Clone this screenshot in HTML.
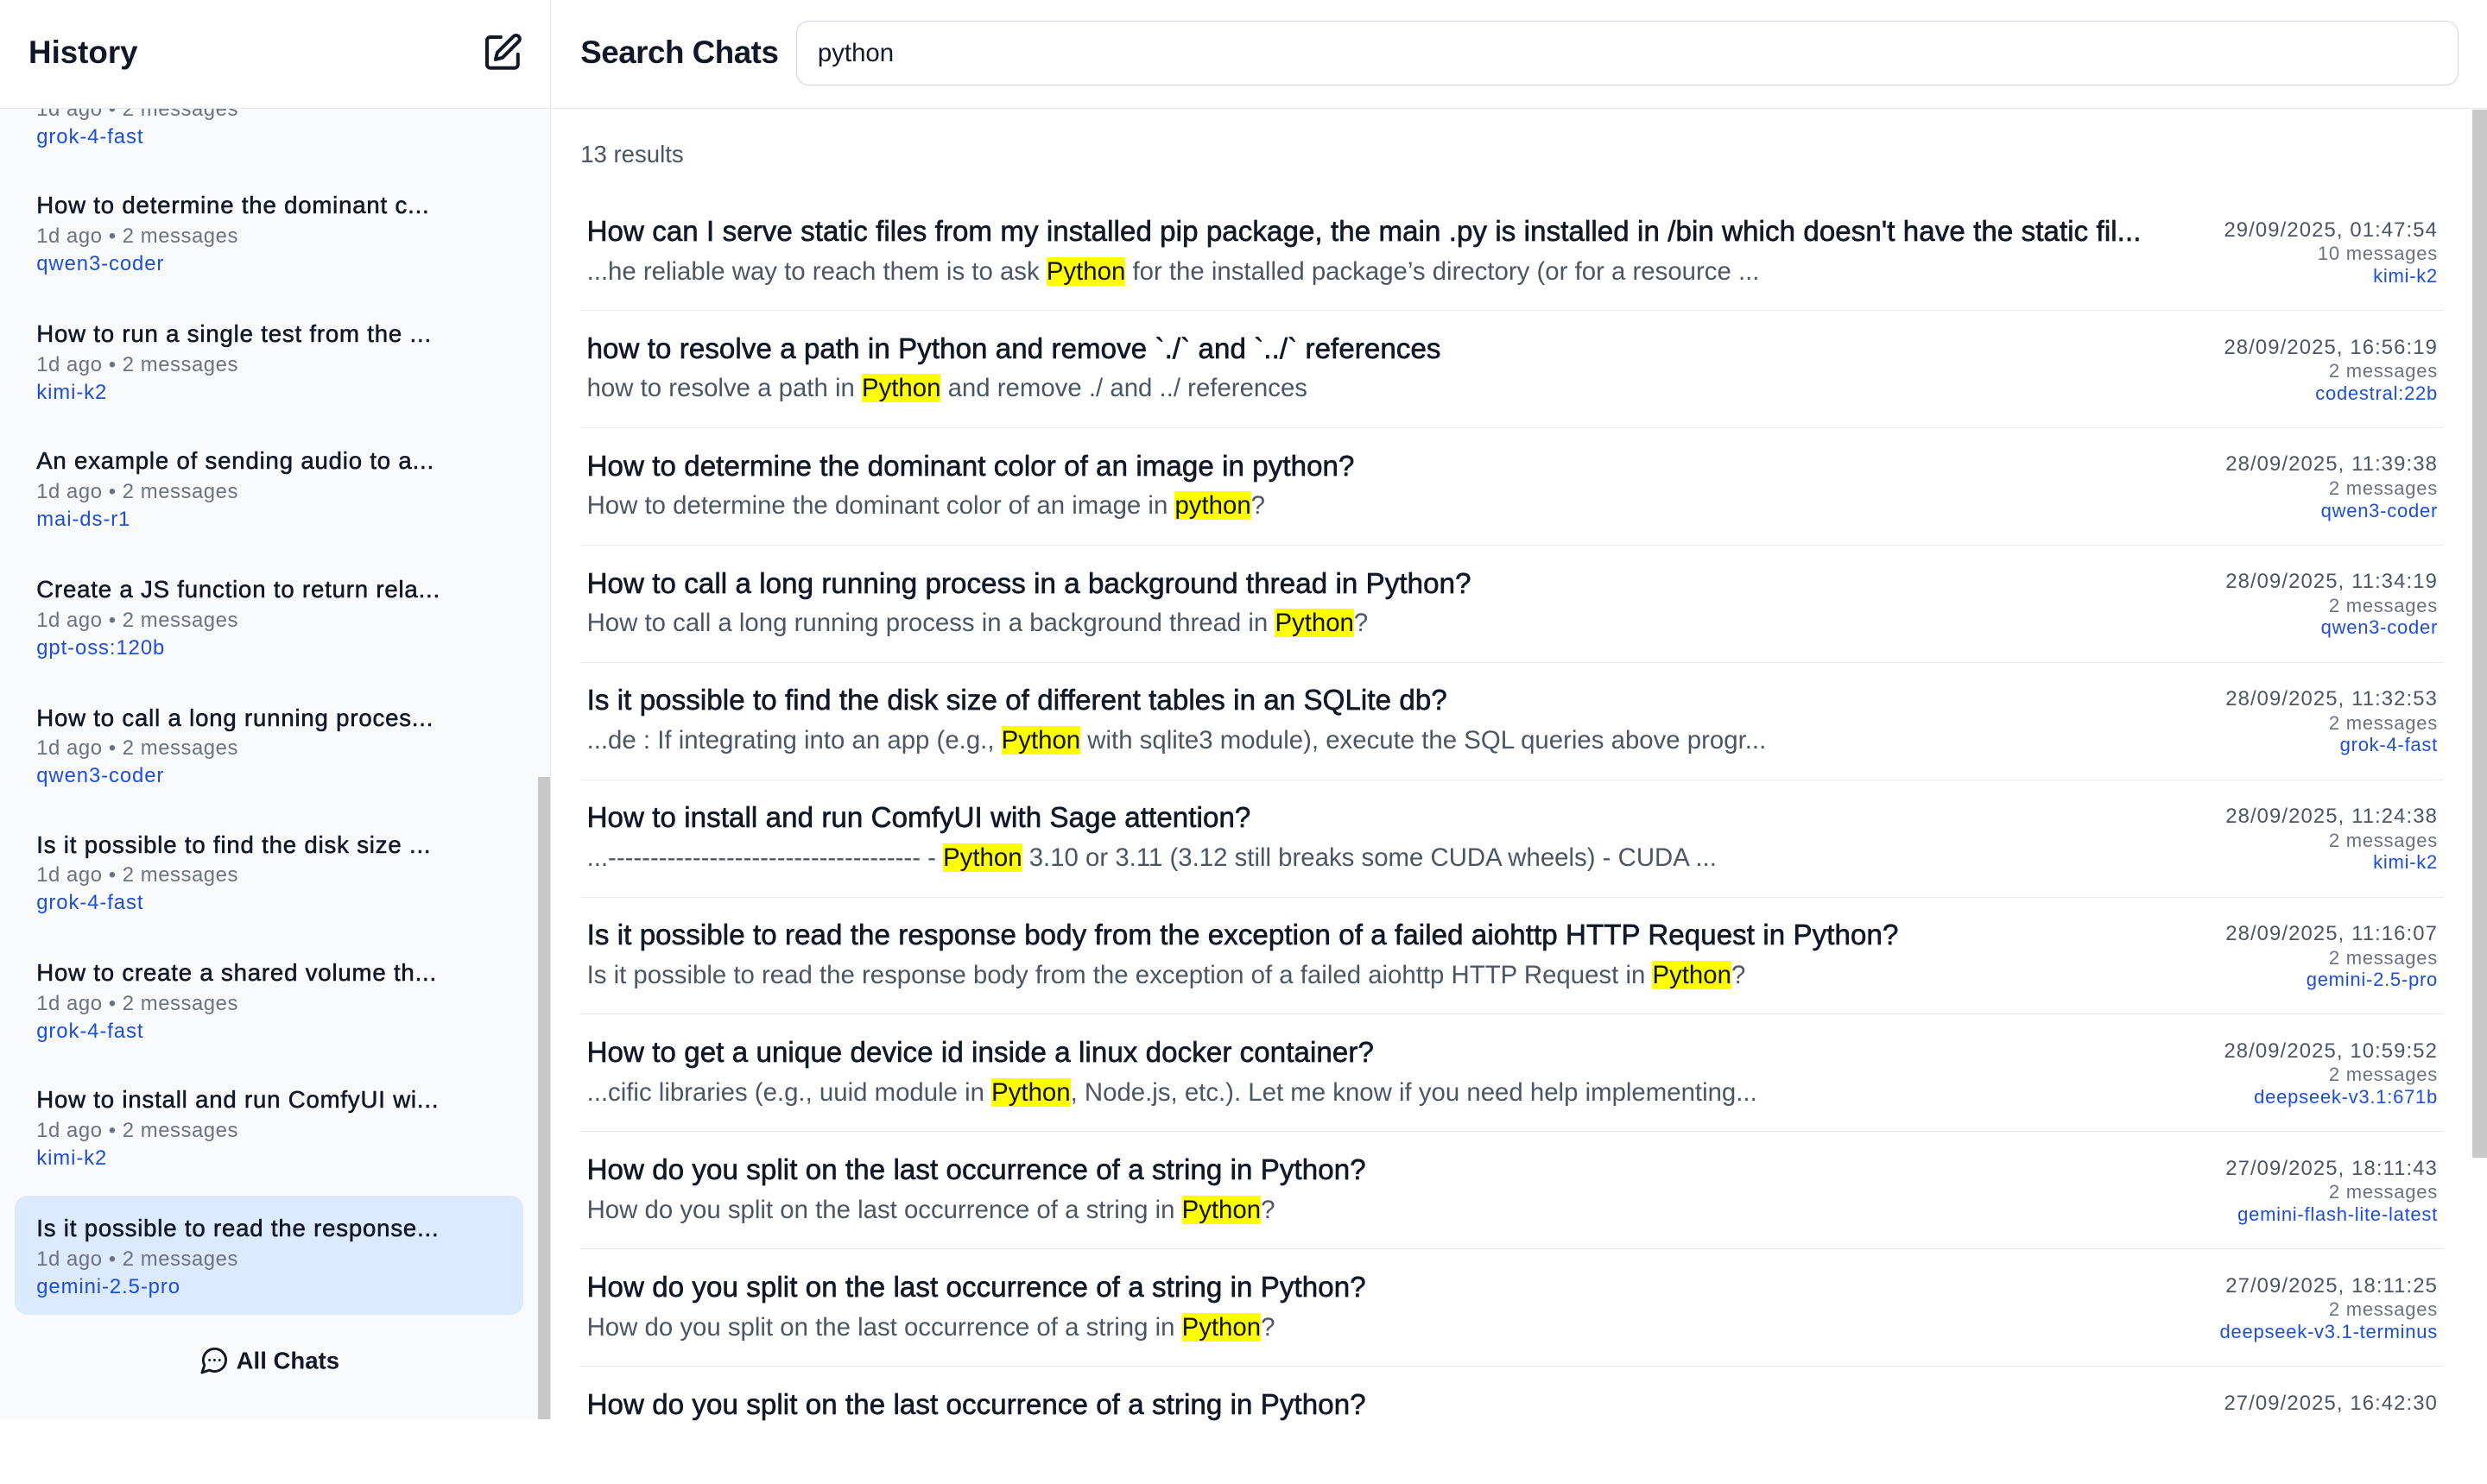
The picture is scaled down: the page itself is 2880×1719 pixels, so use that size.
<!DOCTYPE html>
<html><head><meta charset="utf-8"><style>
html,body{margin:0;padding:0}
body{width:1568px;height:895px;overflow:hidden;zoom:1.83673;font-family:"Liberation Sans",Arial,sans-serif;color:#111827;background:#fff;position:relative}
.side{position:absolute;left:0;top:0;width:347px;height:895px;background:#f8fafc;border-right:1px solid #e5e7eb}
.shead{position:absolute;left:0;top:0;width:347px;height:68px;background:#fff;border-bottom:1px solid #e5e7eb;z-index:2}
.shead h1{position:absolute;left:18px;top:22px;margin:0;font-size:20px;font-weight:700}
.item{position:absolute;left:23px;width:310px}
.t{font-size:15px;color:#111827;white-space:nowrap;line-height:20px;letter-spacing:0.45px;-webkit-text-stroke:0.3px #111827}
.m{font-size:13px;color:#6b7280;line-height:18px;letter-spacing:0.3px}
.b{font-size:13px;color:#1d4ed8;line-height:17px;letter-spacing:0.5px}
.sel{position:absolute;left:9px;top:754px;width:321px;height:75px;background:#dbeafe;border-radius:8px}
.sb1{position:absolute;left:339px;top:490px;width:8px;height:405px;background:#c8c8c8}
.all{position:absolute;left:0;width:340px;top:848px;text-align:center;font-size:15px;font-weight:700}
.main{position:absolute;left:348px;top:0;right:0;height:895px}
.mhead{position:absolute;left:0;right:0;top:0;height:68px;border-bottom:1px solid #e5e7eb}
.mhead h2{position:absolute;left:18px;top:22px;margin:0;font-size:20px;font-weight:700;letter-spacing:-0.25px}
.inp{position:absolute;left:154px;top:13px;border:1px solid #d1d5db;border-radius:8px;font-size:16px;line-height:40px;padding-left:13px;box-sizing:border-box;width:1048px;height:41px}
.cnt{position:absolute;left:18px;top:89px;font-size:15px;color:#4b5563}
.row{position:absolute;left:18px;width:1175px;height:74px;border-bottom:1px solid #e5e7eb;box-sizing:border-box}
.rt{position:absolute;left:4px;top:14px;font-size:18px;white-space:nowrap;color:#111827;-webkit-text-stroke:0.35px #111827;letter-spacing:0.05px}
.rs{position:absolute;left:4px;top:40px;font-size:16px;color:#4b5563;white-space:nowrap}
.rs mark{background:#ffff00;color:#111;}
.rr{position:absolute;right:4px;top:15px;text-align:right}
.d{font-size:13px;color:#4b5563;line-height:16px;letter-spacing:0.6px}
.mm{font-size:12px;color:#6b7280;line-height:14px;letter-spacing:0.4px}
.mb{font-size:12px;color:#1d4ed8;line-height:14px;letter-spacing:0.4px}
.sb2{position:absolute;left:1559px;top:69px;width:9px;height:661px;background:#c8c8c8}
</style></head><body>
<div class="side">
<div class="shead"><h1>History</h1>
<svg style="position:absolute;left:304px;top:20px" width="26" height="26" viewBox="0 0 24 24" fill="none" stroke="#111827" stroke-width="2" stroke-linecap="round" stroke-linejoin="round"><path d="M11 3H5a2 2 0 0 0-2 2v14a2 2 0 0 0 2 2h14a2 2 0 0 0 2-2v-6"/><path d="M18.4 2.6a2 2 0 0 1 3 3L12 15l-4 1 1-4z"/></svg>
</div>
<div class="item" style="top:60px"><div class="m">1d ago • 2 messages</div><div class="b">grok-4-fast</div></div>
<div class="sel"></div>
<div class="item" style="top:120px"><div class="t">How to determine the dominant c...</div><div class="m">1d ago • 2 messages</div><div class="b">qwen3-coder</div></div>
<div class="item" style="top:201px"><div class="t">How to run a single test from the ...</div><div class="m">1d ago • 2 messages</div><div class="b">kimi-k2</div></div>
<div class="item" style="top:281px"><div class="t">An example of sending audio to a...</div><div class="m">1d ago • 2 messages</div><div class="b">mai-ds-r1</div></div>
<div class="item" style="top:362px"><div class="t">Create a JS function to return rela...</div><div class="m">1d ago • 2 messages</div><div class="b">gpt-oss:120b</div></div>
<div class="item" style="top:443px"><div class="t">How to call a long running proces...</div><div class="m">1d ago • 2 messages</div><div class="b">qwen3-coder</div></div>
<div class="item" style="top:523px"><div class="t">Is it possible to find the disk size ...</div><div class="m">1d ago • 2 messages</div><div class="b">grok-4-fast</div></div>
<div class="item" style="top:604px"><div class="t">How to create a shared volume th...</div><div class="m">1d ago • 2 messages</div><div class="b">grok-4-fast</div></div>
<div class="item" style="top:684px"><div class="t">How to install and run ComfyUI wi...</div><div class="m">1d ago • 2 messages</div><div class="b">kimi-k2</div></div>
<div class="item" style="top:765px"><div class="t">Is it possible to read the response...</div><div class="m">1d ago • 2 messages</div><div class="b">gemini-2.5-pro</div></div>
<div class="all"><svg style="vertical-align:-4px;margin-right:4px" width="19" height="19" viewBox="0 0 24 24" fill="none" stroke="#111827" stroke-width="2" stroke-linecap="round" stroke-linejoin="round"><path d="M7.9 20A9 9 0 1 0 4 16.1L2 22Z"/><path d="M8 12h.01M12 12h.01M16 12h.01"/></svg>All Chats</div>
<div class="sb1"></div>
</div>
<div class="main">
<div class="mhead"><h2>Search Chats</h2><div class="inp">python</div></div>
<div class="cnt">13 results</div>
<div class="row" style="top:122px"><div class="rt">How can I serve static files from my installed pip package, the main .py is installed in /bin which doesn't have the static fil...</div><div class="rs">...he reliable way to reach them is to ask <mark>Python</mark> for the installed package’s directory (or for a resource ...</div><div class="rr"><div class="d">29/09/2025, 01:47:54</div><div class="mm">10 messages</div><div class="mb">kimi-k2</div></div></div>
<div class="row" style="top:196px"><div class="rt">how to resolve a path in Python and remove `./` and `../` references</div><div class="rs">how to resolve a path in <mark>Python</mark> and remove ./ and ../ references</div><div class="rr"><div class="d">28/09/2025, 16:56:19</div><div class="mm">2 messages</div><div class="mb">codestral:22b</div></div></div>
<div class="row" style="top:270px"><div class="rt">How to determine the dominant color of an image in python?</div><div class="rs">How to determine the dominant color of an image in <mark>python</mark>?</div><div class="rr"><div class="d">28/09/2025, 11:39:38</div><div class="mm">2 messages</div><div class="mb">qwen3-coder</div></div></div>
<div class="row" style="top:344px"><div class="rt">How to call a long running process in a background thread in Python?</div><div class="rs">How to call a long running process in a background thread in <mark>Python</mark>?</div><div class="rr"><div class="d">28/09/2025, 11:34:19</div><div class="mm">2 messages</div><div class="mb">qwen3-coder</div></div></div>
<div class="row" style="top:418px"><div class="rt">Is it possible to find the disk size of different tables in an SQLite db?</div><div class="rs">...de : If integrating into an app (e.g., <mark>Python</mark> with sqlite3 module), execute the SQL queries above progr...</div><div class="rr"><div class="d">28/09/2025, 11:32:53</div><div class="mm">2 messages</div><div class="mb">grok-4-fast</div></div></div>
<div class="row" style="top:492px"><div class="rt">How to install and run ComfyUI with Sage attention?</div><div class="rs">...------------------------------------- - <mark>Python</mark> 3.10 or 3.11 (3.12 still breaks some CUDA wheels) - CUDA ...</div><div class="rr"><div class="d">28/09/2025, 11:24:38</div><div class="mm">2 messages</div><div class="mb">kimi-k2</div></div></div>
<div class="row" style="top:566px"><div class="rt">Is it possible to read the response body from the exception of a failed aiohttp HTTP Request in Python?</div><div class="rs">Is it possible to read the response body from the exception of a failed aiohttp HTTP Request in <mark>Python</mark>?</div><div class="rr"><div class="d">28/09/2025, 11:16:07</div><div class="mm">2 messages</div><div class="mb">gemini-2.5-pro</div></div></div>
<div class="row" style="top:640px"><div class="rt">How to get a unique device id inside a linux docker container?</div><div class="rs">...cific libraries (e.g., uuid module in <mark>Python</mark>, Node.js, etc.). Let me know if you need help implementing...</div><div class="rr"><div class="d">28/09/2025, 10:59:52</div><div class="mm">2 messages</div><div class="mb">deepseek-v3.1:671b</div></div></div>
<div class="row" style="top:714px"><div class="rt">How do you split on the last occurrence of a string in Python?</div><div class="rs">How do you split on the last occurrence of a string in <mark>Python</mark>?</div><div class="rr"><div class="d">27/09/2025, 18:11:43</div><div class="mm">2 messages</div><div class="mb">gemini-flash-lite-latest</div></div></div>
<div class="row" style="top:788px"><div class="rt">How do you split on the last occurrence of a string in Python?</div><div class="rs">How do you split on the last occurrence of a string in <mark>Python</mark>?</div><div class="rr"><div class="d">27/09/2025, 18:11:25</div><div class="mm">2 messages</div><div class="mb">deepseek-v3.1-terminus</div></div></div>
<div class="row" style="top:862px;border:none"><div class="rt">How do you split on the last occurrence of a string in Python?</div><div class="rr"><div class="d">27/09/2025, 16:42:30</div></div></div>
</div>
<div class="sb2"></div>
</body></html>
